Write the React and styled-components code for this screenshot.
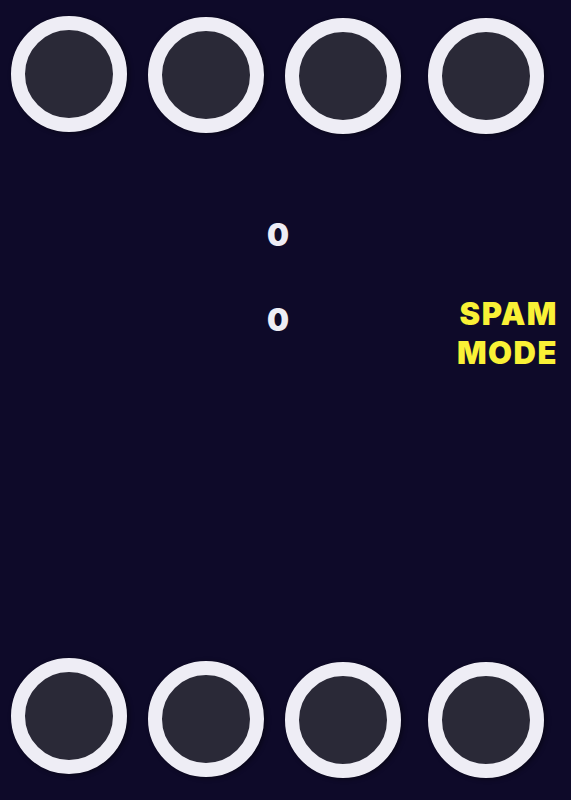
import React from "react";
import styled, { createGlobalStyle } from "styled-components";

const GlobalStyle = createGlobalStyle`
	html, body {
		margin: 0;
		padding: 0;
		background: #0e0a29;
	}
	body {
		font-family: "Inter", "Liberation Sans", sans-serif;
	}
`;

// pad row: small drops so the buttons don't sit on a perfect line
const topPads = [
	{ drop: 0, extra: 0 },
	{ drop: 1, extra: 0 },
	{ drop: 2, extra: 0 },
	{ drop: 2, extra: 6 },
];
const bottomPads = [
	{ drop: 0, extra: 0 },
	{ drop: 3, extra: 0 },
	{ drop: 4, extra: 0 },
	{ drop: 4, extra: 6 },
];

const App = () => {
	return (
		<>
			<GlobalStyle />
			<Screen>
				<PadRow $top>
					{topPads.map((p, i) => (
						<Pad key={i} $drop={p.drop} $extra={p.extra} />
					))}
				</PadRow>

				<Middle>
					<Scores>
						<Score>0</Score>
						<Score>0</Score>
					</Scores>
					<SpamButton>
						SPAM
						<br />
						MODE
					</SpamButton>
				</Middle>

				<PadRow>
					{bottomPads.map((p, i) => (
						<Pad key={i} $drop={p.drop} $extra={p.extra} />
					))}
				</PadRow>
			</Screen>
		</>
	);
};

export default App;

const Screen = styled.div`
	width: 571px;
	height: 800px;
	background: #0e0a29;
	display: flex;
	flex-direction: column;
	justify-content: space-between;
	overflow: hidden;
`;

const PadRow = styled.div`
	display: flex;
	flex-direction: row;
	align-items: flex-start;
	gap: 21px;
	padding: ${(props) => (props.$top ? "16px 0 0 11px" : "0 0 22px 11px")};
`;

const Pad = styled.div`
	box-sizing: border-box;
	width: 116px;
	height: 116px;
	border-radius: 50%;
	border: 14px solid #eeedf5;
	background: #2a2937;
	box-shadow: 2px 1px 5px rgba(0, 0, 0, 0.45);
	margin-top: ${(props) => props.$drop}px;
	margin-left: ${(props) => props.$extra}px;
	cursor: pointer;
`;

const Middle = styled.div`
	flex: 1;
	display: flex;
	flex-direction: row;
	justify-content: space-between;
	align-items: flex-start;
	padding: 83px 13px 0 267px;
`;

const Scores = styled.div`
	display: flex;
	flex-direction: column;
	gap: 49px;
`;

const Score = styled.div`
	font-size: 31px;
	font-weight: 900;
	line-height: 36px;
	color: #eeedf5;
`;

const SpamButton = styled.div`
	margin-top: 77px;
	font-size: 31px;
	font-weight: 900;
	line-height: 39px;
	letter-spacing: 1.5px;
	text-align: right;
	color: #f9f136;
	cursor: pointer;
`;
